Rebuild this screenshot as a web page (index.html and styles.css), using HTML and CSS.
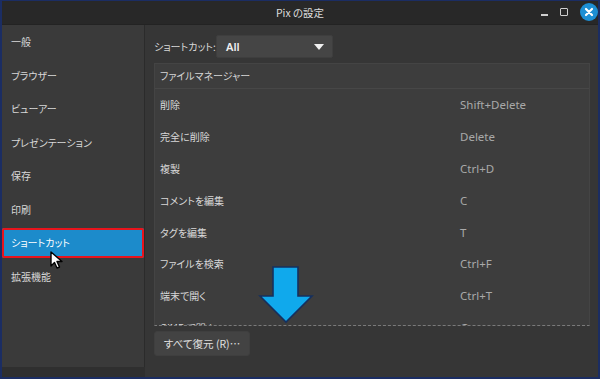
FILE: index.html
```html
<!DOCTYPE html>
<html lang="ja">
<head>
  <meta charset="UTF-8">
  <title>Pix の設定</title>
  <link rel="stylesheet" href="styles.css">
</head>
<body>
  <div class="window">
    <div class="titlebar">
      <span class="title">Pix の設定</span>
      <div class="controls">
        <span class="ctl-min"></span>
        <span class="ctl-max"></span>
        <span class="ctl-close">
          <svg width="18" height="18" viewBox="0 0 18 18"><circle cx="9" cy="9" r="9" fill="#1d8fd4"/><path d="M6 6 L12 12 M12 6 L6 12" stroke="#fff" stroke-width="2.2" stroke-linecap="round"/></svg>
        </span>
      </div>
    </div>
    <div class="content">
      <ul class="sidebar">
        <li>一般</li>
        <li>ブラウザー</li>
        <li>ビューアー</li>
        <li>プレゼンテーション</li>
        <li>保存</li>
        <li>印刷</li>
        <li class="active">ショートカット</li>
        <li>拡張機能</li>
      </ul>
      <div class="main">
        <div class="filter">
          <span class="filter-label">ショートカット:</span>
          <div class="combo">
            <span>All</span>
            <svg width="10" height="6" viewBox="0 0 10 6"><path d="M0 0 H10 L5 6 Z" fill="#f0f0f0"/></svg>
          </div>
        </div>
        <div class="list">
          <div class="list-head">ファイルマネージャー</div>
          <div class="row"><span class="name">削除</span><span class="key">Shift+Delete</span></div>
          <div class="row"><span class="name">完全に削除</span><span class="key">Delete</span></div>
          <div class="row"><span class="name">複製</span><span class="key">Ctrl+D</span></div>
          <div class="row"><span class="name">コメントを編集</span><span class="key">C</span></div>
          <div class="row"><span class="name">タグを編集</span><span class="key">T</span></div>
          <div class="row"><span class="name">ファイルを検索</span><span class="key">Ctrl+F</span></div>
          <div class="row"><span class="name">端末で開く</span><span class="key">Ctrl+T</span></div>
          <div class="row"><span class="name">GIMP で開く</span><span class="key">G</span></div>
        </div>
        <div class="actions">
          <button class="restore">すべて復元 (R)…</button>
        </div>
      </div>
    </div>
    <!-- annotation overlays -->
    <svg class="cursor" width="14" height="20" viewBox="0 0 14 20"><path d="M1 1 L1 15 L4.5 11.5 L7 17 L9.5 16 L7 10.5 L12 10.5 Z" fill="#fff" stroke="#000" stroke-width="1.4" stroke-linejoin="round"/></svg>
    <svg class="arrow" width="56" height="58" viewBox="0 0 56 58"><path d="M15 1 H40 V30 H54 L28 56 L2 30 H15 Z" fill="#10a9ec" stroke="#16305e" stroke-width="1.6" stroke-linejoin="miter"/></svg>
  </div>
</body>
</html>
```

FILE: styles.css
```css
html, body {
  margin: 0;
  padding: 0;
}
body {
  font-family: "Noto Sans CJK JP", "Noto Sans", sans-serif;
  font-size: 10px;
  font-feature-settings: "palt";
  color: #d6d6d6;
  background: #1b2d63;
}
.window {
  position: relative;
  width: 600px;
  height: 379px;
  box-sizing: border-box;
  border: 2px solid #1b2d63;
  border-top-width: 1px;
  background: #2f2f2f;
  display: flex;
  flex-direction: column;
  overflow: hidden;
}
.titlebar {
  height: 23px;
  flex-shrink: 0;
  background: #282828;
  border-bottom: 1px solid #232323;
  display: flex;
  align-items: center;
  justify-content: center;
  position: relative;
}
.title {
  color: #dcdcdc;
  font-size: 10.5px;
}
.controls {
  position: absolute;
  right: 0;
  top: 2px;
  display: flex;
  align-items: center;
  gap: 12px;
}
.ctl-min {
  width: 7px;
  height: 2px;
  margin-top: 6px;
  background: #cfcfcf;
}
.ctl-max {
  width: 6px;
  height: 6px;
  border: 1.5px solid #cfcfcf;
  border-radius: 1px;
}
.ctl-close svg {
  display: block;
}
.content {
  flex: 1;
  display: flex;
  min-height: 0;
}
.sidebar {
  list-style: none;
  margin: 0 0 10px 0;
  padding: 0;
  width: 142px;
  background: #3a3a3a;
  border-right: 1px solid #2b2b2b;
}
.sidebar li {
  height: 33.6px;
  line-height: 33.6px;
  padding-left: 9px;
  color: #d8d8d8;
}
.sidebar li.active {
  background: #1c8bcb;
  color: #fff;
  box-shadow: inset 0 0 0 2px #e8141c;
  border-radius: 2px;
  height: 30px;
  line-height: 30px;
  margin: 1px 0 2.6px 0;
}
.main {
  flex: 1;
  background: #363636;
  padding: 10px 8px 0 9px;
  display: flex;
  flex-direction: column;
}
.filter {
  display: flex;
  align-items: center;
  gap: 0;
  height: 23px;
}
.filter-label {
  color: #d8d8d8;
  width: 62px;
}
.combo {
  width: 117px;
  height: 23px;
  box-sizing: border-box;
  background: #454545;
  border: 1px solid #3e3e3e;
  border-radius: 2px;
  display: flex;
  align-items: center;
  justify-content: space-between;
  padding: 0 8px 0 9px;
  color: #f0f0f0;
  font-family: "Noto Sans", sans-serif;
  font-size: 11px;
  font-weight: 600;
}
.list {
  margin-top: 5px;
  height: 263px;
  box-sizing: border-box;
  background: #3d3d3d;
  border: 1px solid #444;
  border-bottom: 1px dashed #7a7a7a;
  overflow: hidden;
}
.list-head {
  height: 24px;
  line-height: 24px;
  padding-left: 5px;
  border-bottom: 1px solid #474747;
  color: #d6d6d6;
}
.row {
  display: flex;
  height: 31.8px;
  align-items: center;
  padding-left: 5px;
}
.row:first-of-type {
  margin-top: 2px;
}
.name {
  width: 300px;
  color: #d8d8d8;
}
.key {
  font-family: "Noto Sans", sans-serif;
  color: #a9a9a9;
  font-size: 11.5px;
}
.actions {
  padding-top: 5px;
}
.restore {
  width: 96px;
  height: 25px;
  background: #434343;
  border: 1px solid #3f3f3f;
  border-radius: 3px;
  color: #e0e0e0;
  font-family: "Noto Sans CJK JP", "Noto Sans", sans-serif;
  font-feature-settings: "palt";
  font-size: 10.5px;
  padding: 0;
}
.cursor {
  position: absolute;
  left: 48px;
  top: 250px;
}
.arrow {
  position: absolute;
  left: 256px;
  top: 265px;
}
```
